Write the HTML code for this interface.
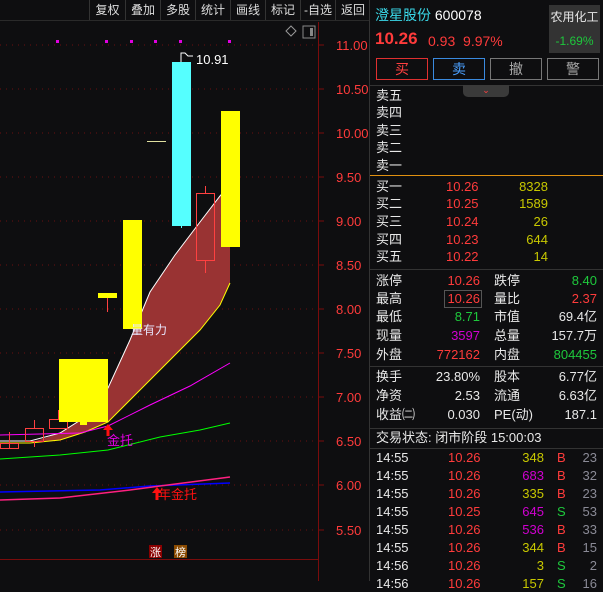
<!DOCTYPE html>
<html><head><meta charset="utf-8"><style>
*{margin:0;padding:0;box-sizing:border-box}
body{width:603px;height:581px;background:#0e0e10;overflow:hidden;position:relative;font-family:"Liberation Sans","Noto Sans CJK SC",sans-serif;font-size:13px;color:#e8e8e8}
.a{position:absolute;white-space:nowrap;line-height:16px}
.r{text-align:right}
.red{color:#ff3b3b}.grn{color:#1ec83c}.yel{color:#c8c800}.mag{color:#d000d0}.gry{color:#8a8a96}
.tb{position:absolute;top:0;height:20px;border-left:1px solid #333;color:#ddd;font-size:12px;line-height:20px;text-align:center}
.btn{position:absolute;top:58px;height:22px;width:52px;border:1px solid;text-align:center;line-height:20px;font-size:14px}
</style></head><body>
<svg width="370" height="581" style="position:absolute;left:0;top:0">
<g stroke="#6a1010" stroke-dasharray="1,5">
<line x1="0" y1="45" x2="318" y2="45"/><line x1="0" y1="89" x2="318" y2="89"/><line x1="0" y1="133" x2="318" y2="133"/><line x1="0" y1="177" x2="318" y2="177"/><line x1="0" y1="221" x2="318" y2="221"/><line x1="0" y1="265" x2="318" y2="265"/><line x1="0" y1="309" x2="318" y2="309"/><line x1="0" y1="353" x2="318" y2="353"/><line x1="0" y1="397" x2="318" y2="397"/><line x1="0" y1="441" x2="318" y2="441"/><line x1="0" y1="485" x2="318" y2="485"/><line x1="0" y1="530" x2="318" y2="530"/>
</g>
<line x1="318.5" y1="22" x2="318.5" y2="581" stroke="#7a0c0c"/>
<line x1="0" y1="559.5" x2="318" y2="559.5" stroke="#7a0c0c"/>
<line x1="0" y1="20.5" x2="370" y2="20.5" stroke="#2a2a2a"/>
<g stroke="#7a0c0c"><line x1="318" y1="45" x2="324" y2="45"/><line x1="318" y1="89" x2="324" y2="89"/><line x1="318" y1="133" x2="324" y2="133"/><line x1="318" y1="177" x2="324" y2="177"/><line x1="318" y1="221" x2="324" y2="221"/><line x1="318" y1="265" x2="324" y2="265"/><line x1="318" y1="309" x2="324" y2="309"/><line x1="318" y1="353" x2="324" y2="353"/><line x1="318" y1="397" x2="324" y2="397"/><line x1="318" y1="441" x2="324" y2="441"/><line x1="318" y1="485" x2="324" y2="485"/><line x1="318" y1="530" x2="324" y2="530"/></g>
<g fill="#ff3b3b" font-size="13" font-family="Liberation Sans,sans-serif">
<text x="336" y="50">11.00</text><text x="336" y="94">10.50</text><text x="336" y="138">10.00</text><text x="336" y="182">9.50</text><text x="336" y="226">9.00</text><text x="336" y="270">8.50</text><text x="336" y="314">8.00</text><text x="336" y="358">7.50</text><text x="336" y="402">7.00</text><text x="336" y="446">6.50</text><text x="336" y="490">6.00</text><text x="336" y="535">5.50</text>
</g>
<rect x="303" y="26" width="12" height="12" fill="none" stroke="#888"/><rect x="310" y="28" width="3" height="8" fill="#888"/>
<path d="M291 26 L296 31 L291 36 L286 31Z" fill="none" stroke="#999"/>
<g fill="#e000e0"><rect x="56" y="40" width="3" height="3"/><rect x="105" y="40" width="3" height="3"/><rect x="130" y="40" width="3" height="3"/><rect x="154" y="40" width="3" height="3"/><rect x="179" y="40" width="3" height="3"/><rect x="228" y="40" width="3" height="3"/></g>
<path d="M30 443 L60 433 L90 414 L108 388 L130 340 L150 292 L175 255 L200 222 L220 196 L230 185 L230 283 L220 305 L200 330 L170 360 L150 380 L130 400 L108 422 L85 432 L60 440 Z" fill="#993333"/>
<polyline points="0,441 30,441 60,433 90,414 108,388 130,340 150,292 175,255 200,222 220,196 230,185" fill="none" stroke="#fff" stroke-width="1"/>
<polyline points="0,443 30,443 60,440 85,432 108,422 130,400 150,380 170,360 200,330 220,305 230,283" fill="none" stroke="#ffff00" stroke-width="1"/>
<polyline points="0,435 80,433 108,426 150,405 190,386 230,363" fill="none" stroke="#ff00ff"/>
<polyline points="0,459 60,455 108,450 160,437 200,430 230,423" fill="none" stroke="#00ff00"/>
<polyline points="0,492 100,490 150,486 230,483" fill="none" stroke="#0000ff" stroke-width="1.5"/>
<polyline points="0,500 60,498 130,490 160,486 230,477" fill="none" stroke="#ff2080" stroke-width="1.5"/>
<rect x="0.5" y="443.5" width="18" height="5" fill="none" stroke="#ff4040"/>
<line x1="9.5" y1="432" x2="9.5" y2="449" stroke="#ff4040"/>
<rect x="25.5" y="428.5" width="18" height="13" fill="none" stroke="#ff4040"/>
<line x1="34.5" y1="420" x2="34.5" y2="428" stroke="#ff4040"/><line x1="34.5" y1="442" x2="34.5" y2="447" stroke="#ff4040"/>
<rect x="49.5" y="419.5" width="18" height="9" fill="none" stroke="#ff4040"/>
<line x1="58.5" y1="410" x2="58.5" y2="419" stroke="#ff4040"/>
<rect x="59" y="359" width="49" height="63" fill="#ffff00"/><rect x="80" y="420" width="7" height="5" fill="#ffff00"/>
<line x1="107.5" y1="298" x2="107.5" y2="312" stroke="#ff4040"/>
<rect x="98" y="293" width="19" height="5" fill="#ffff00"/>
<rect x="123" y="220" width="19" height="109" fill="#ffff00"/>
<line x1="147" y1="141.5" x2="166" y2="141.5" stroke="#e0e0a0"/>
<rect x="172" y="62" width="19" height="164" fill="#55ffff"/>
<line x1="181.5" y1="226" x2="181.5" y2="228" stroke="#55ffff"/>
<line x1="205.5" y1="186" x2="205.5" y2="193" stroke="#ff4040"/>
<line x1="205.5" y1="261" x2="205.5" y2="273" stroke="#ff4040"/>
<rect x="196.5" y="193.5" width="18" height="67" fill="none" stroke="#ff4040"/>
<rect x="221" y="111" width="19" height="136" fill="#ffff00"/>
<path d="M181 62 V53 H185 L188 56 H193" fill="none" stroke="#fff"/>
<text x="196" y="64" fill="#fff" font-size="13" font-family="Liberation Sans,sans-serif">10.91</text>
<text x="131" y="334" fill="#e8e8ff" font-size="12" font-family="Noto Sans CJK SC,sans-serif">量有力</text>
<path d="M108 424 L103 430 H106.5 V436 H109.5 V430 H113Z" fill="#ff1010"/>
<text x="107" y="445" fill="#e000e0" font-size="13" font-family="Noto Sans CJK SC,sans-serif">金托</text>
<path d="M157 487 L152 493 H155.5 V500 H158.5 V493 H162Z" fill="#ff1010"/>
<text x="158" y="499" fill="#ff1010" font-size="13" font-family="Noto Sans CJK SC,sans-serif">年金托</text>
<rect x="149" y="545" width="13" height="13" fill="#8a0000"/><text x="150" y="556" fill="#fff" font-size="11" font-family="Noto Sans CJK SC,sans-serif">涨</text>
<rect x="174" y="545" width="13" height="13" fill="#8a4a00"/><text x="175" y="556" fill="#fff" font-size="11" font-family="Noto Sans CJK SC,sans-serif">榜</text>
</svg>
<div class="tb" style="left:89px;width:36px">复权</div>
<div class="tb" style="left:125px;width:35px">叠加</div>
<div class="tb" style="left:160px;width:35px">多股</div>
<div class="tb" style="left:195px;width:35px">统计</div>
<div class="tb" style="left:230px;width:35px">画线</div>
<div class="tb" style="left:265px;width:35px">标记</div>
<div class="tb" style="left:300px;width:35px">-自选</div>
<div class="tb" style="left:335px;width:35px">返回</div>
<div style="position:absolute;left:369px;top:0;width:1px;height:581px;background:#333"></div>
<div class="a" style="left:375px;top:7px;font-size:14px;color:#3ad8e8">澄星股份 <span style="color:#fff">600078</span></div>
<div class="a red" style="left:375px;top:31px;font-size:17px;font-weight:bold">10.26</div>
<div class="a red" style="left:428px;top:33px;font-size:14px">0.93&nbsp; 9.97%</div>
<div style="position:absolute;left:549px;top:5px;width:51px;height:48px;background:#333"></div>
<div class="a" style="left:549px;top:9px;width:51px;text-align:center;font-size:12px">农用化工</div>
<div class="a grn" style="left:549px;top:33px;width:51px;text-align:center;font-size:12px">-1.69%</div>
<div class="btn" style="left:376px;border-color:#e03030;color:#ff4040">买</div>
<div class="btn" style="left:433px;border-color:#3a8ae0;color:#4aa0ff">卖</div>
<div class="btn" style="left:490px;border-color:#777;color:#aaa">撤</div>
<div class="btn" style="left:547px;border-color:#777;color:#aaa">警</div>
<div style="position:absolute;left:370px;top:85px;width:233px;height:1px;background:#333"></div>
<div style="position:absolute;left:463px;top:85px;width:46px;height:12px;background:#3a3a3a;border-radius:0 0 5px 5px;color:#ff4040;font-size:9px;text-align:center;line-height:10px">⌄</div>
<div class="a" style="left:376px;top:88px">卖五</div>
<div class="a" style="left:376px;top:105px">卖四</div>
<div class="a" style="left:376px;top:123px">卖三</div>
<div class="a" style="left:376px;top:140px">卖二</div>
<div class="a" style="left:376px;top:158px">卖一</div>
<div style="position:absolute;left:370px;top:175px;width:233px;height:1px;background:#e09010"></div>
<div class="a" style="left:376px;top:179px">买一</div><div class="a red" style="left:446px;top:179px">10.26</div><div class="a yel r" style="left:500px;top:179px;width:48px">8328</div>
<div class="a" style="left:376px;top:196px">买二</div><div class="a red" style="left:446px;top:196px">10.25</div><div class="a yel r" style="left:500px;top:196px;width:48px">1589</div>
<div class="a" style="left:376px;top:214px">买三</div><div class="a red" style="left:446px;top:214px">10.24</div><div class="a yel r" style="left:500px;top:214px;width:48px">26</div>
<div class="a" style="left:376px;top:232px">买四</div><div class="a red" style="left:446px;top:232px">10.23</div><div class="a yel r" style="left:500px;top:232px;width:48px">644</div>
<div class="a" style="left:376px;top:249px">买五</div><div class="a red" style="left:446px;top:249px">10.22</div><div class="a yel r" style="left:500px;top:249px;width:48px">14</div>
<div style="position:absolute;left:370px;top:269px;width:233px;height:1px;background:#333"></div>
<div class="a" style="left:376px;top:273px">涨停</div><div class="a red r" style="left:420px;top:273px;width:60px">10.26</div><div class="a" style="left:494px;top:273px">跌停</div><div class="a grn r" style="left:540px;top:273px;width:57px">8.40</div>
<div class="a" style="left:376px;top:291px">最高</div><div class="a red r" style="left:444px;top:290px;width:38px;border:1px solid #555;padding-right:1px;height:18px">10.26</div><div class="a" style="left:494px;top:291px">量比</div><div class="a red r" style="left:540px;top:291px;width:57px">2.37</div>
<div class="a" style="left:376px;top:309px">最低</div><div class="a grn r" style="left:420px;top:309px;width:60px">8.71</div><div class="a" style="left:494px;top:309px">市值</div><div class="a r" style="left:530px;top:309px;width:67px">69.4亿</div>
<div class="a" style="left:376px;top:328px">现量</div><div class="a mag r" style="left:420px;top:328px;width:60px">3597</div><div class="a" style="left:494px;top:328px">总量</div><div class="a r" style="left:530px;top:328px;width:67px">157.7万</div>
<div class="a" style="left:376px;top:347px">外盘</div><div class="a red r" style="left:420px;top:347px;width:60px">772162</div><div class="a" style="left:494px;top:347px">内盘</div><div class="a grn r" style="left:530px;top:347px;width:67px">804455</div>
<div style="position:absolute;left:370px;top:366px;width:233px;height:1px;background:#333"></div>
<div class="a" style="left:376px;top:369px">换手</div><div class="a r" style="left:420px;top:369px;width:60px">23.80%</div><div class="a" style="left:494px;top:369px">股本</div><div class="a r" style="left:530px;top:369px;width:67px">6.77亿</div>
<div class="a" style="left:376px;top:388px">净资</div><div class="a r" style="left:420px;top:388px;width:60px">2.53</div><div class="a" style="left:494px;top:388px">流通</div><div class="a r" style="left:530px;top:388px;width:67px">6.63亿</div>
<div class="a" style="left:376px;top:407px">收益㈡</div><div class="a r" style="left:420px;top:407px;width:60px">0.030</div><div class="a" style="left:494px;top:407px">PE(动)</div><div class="a r" style="left:530px;top:407px;width:67px">187.1</div>
<div style="position:absolute;left:370px;top:428px;width:233px;height:1px;background:#333"></div>
<div class="a" style="left:376px;top:430px">交易状态: 闭市阶段 15:00:03</div>
<div style="position:absolute;left:370px;top:448px;width:233px;height:1px;background:#333"></div>
<div style="position:absolute;left:0;top:450px;width:603px">
<div class="a" style="left:376px;top:0">14:55</div><div class="a red" style="left:448px;top:0">10.26</div><div class="a yel r" style="left:500px;top:0;width:44px">348</div><div class="a red" style="left:557px;top:0">B</div><div class="a gry r" style="left:575px;top:0;width:22px">23</div>
<div class="a" style="left:376px;top:18px">14:55</div><div class="a red" style="left:448px;top:18px">10.26</div><div class="a mag r" style="left:500px;top:18px;width:44px">683</div><div class="a red" style="left:557px;top:18px">B</div><div class="a gry r" style="left:575px;top:18px;width:22px">32</div>
<div class="a" style="left:376px;top:36px">14:55</div><div class="a red" style="left:448px;top:36px">10.26</div><div class="a yel r" style="left:500px;top:36px;width:44px">335</div><div class="a red" style="left:557px;top:36px">B</div><div class="a gry r" style="left:575px;top:36px;width:22px">23</div>
<div class="a" style="left:376px;top:54px">14:55</div><div class="a red" style="left:448px;top:54px">10.25</div><div class="a mag r" style="left:500px;top:54px;width:44px">645</div><div class="a grn" style="left:557px;top:54px">S</div><div class="a gry r" style="left:575px;top:54px;width:22px">53</div>
<div class="a" style="left:376px;top:72px">14:55</div><div class="a red" style="left:448px;top:72px">10.26</div><div class="a mag r" style="left:500px;top:72px;width:44px">536</div><div class="a red" style="left:557px;top:72px">B</div><div class="a gry r" style="left:575px;top:72px;width:22px">33</div>
<div class="a" style="left:376px;top:90px">14:55</div><div class="a red" style="left:448px;top:90px">10.26</div><div class="a yel r" style="left:500px;top:90px;width:44px">344</div><div class="a red" style="left:557px;top:90px">B</div><div class="a gry r" style="left:575px;top:90px;width:22px">15</div>
<div class="a" style="left:376px;top:108px">14:56</div><div class="a red" style="left:448px;top:108px">10.26</div><div class="a yel r" style="left:500px;top:108px;width:44px">3</div><div class="a grn" style="left:557px;top:108px">S</div><div class="a gry r" style="left:575px;top:108px;width:22px">2</div>
<div class="a" style="left:376px;top:126px">14:56</div><div class="a red" style="left:448px;top:126px">10.26</div><div class="a yel r" style="left:500px;top:126px;width:44px">157</div><div class="a grn" style="left:557px;top:126px">S</div><div class="a gry r" style="left:575px;top:126px;width:22px">16</div>
</div>
</body></html>
